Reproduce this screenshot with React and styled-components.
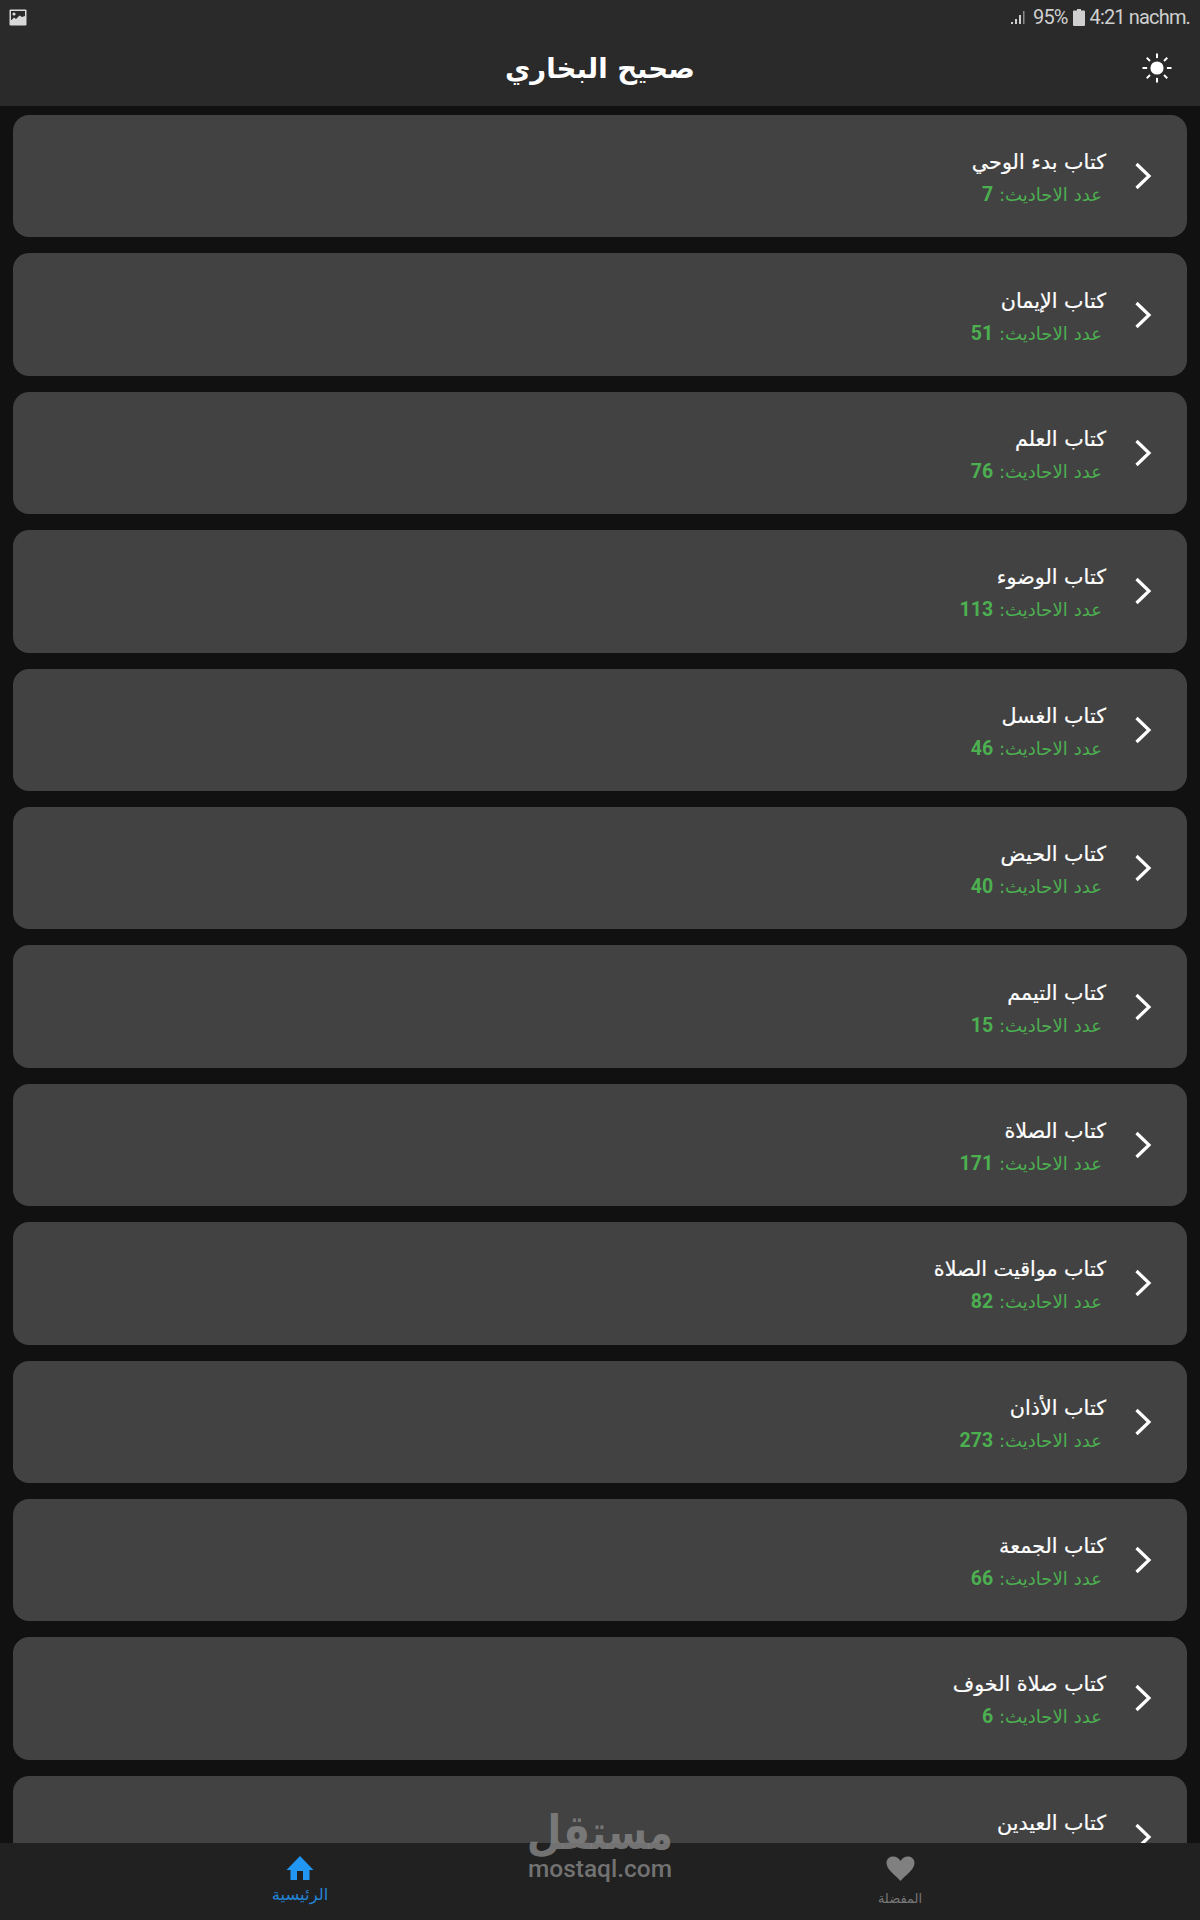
import React from "react";
import styled, { createGlobalStyle } from "styled-components";

const Global = createGlobalStyle`
  html, body { margin: 0; padding: 0; background: #111111; }
  * { box-sizing: border-box; }
`;

const ARABIC = `"DejaVu Sans", "Noto Sans", sans-serif`;

const Screen = styled.div`
  position: relative;
  width: 1200px;
  height: 1920px;
  display: flex;
  flex-direction: column;
  overflow: hidden;
  background: #111111;
  font-family: ${ARABIC};
`;

const Header = styled.header`
  flex: none;
  height: 106px;
  background: #2a2a2a;
  display: flex;
  flex-direction: column;
`;

const StatusBar = styled.div`
  height: 34px;
  padding: 0 10px 0 9px;
  display: flex;
  align-items: center;
  justify-content: space-between;
`;

const StatusRight = styled.div`
  display: flex;
  align-items: center;
  gap: 5px;
  color: #cfcfcf;
  font: 400 20px Roboto, sans-serif;
  letter-spacing: -0.85px;
`;

const TitleBar = styled.div`
  flex: 1;
  position: relative;
  display: flex;
  align-items: center;
  justify-content: center;
  padding-bottom: 3px;
`;

const Title = styled.h1`
  margin: 0;
  color: #ffffff;
  font-size: 27.6px;
  font-weight: 700;
  line-height: 40px;
`;

const ThemeButton = styled.span`
  position: absolute;
  right: 28px;
  top: 19px;
  display: flex;
`;

const List = styled.main`
  flex: 1;
  min-height: 0;
  overflow: hidden;
  padding: 9px 13px 0;
  display: flex;
  flex-direction: column;
  gap: 16px;
`;

const Card = styled.article`
  flex: none;
  height: 122.4px;
  border-radius: 16px;
  background: #424242;
  display: flex;
  direction: rtl;
  align-items: center;
  padding-right: 35px;
  gap: 28px;
`;

const CardText = styled.div`
  display: flex;
  flex-direction: column;
  align-items: flex-start;
  gap: 9px;
  margin-top: 3px;
`;

const CardTitle = styled.div`
  color: #ffffff;
  font-size: 20.7px;
  font-weight: 400;
  line-height: 26px;
  -webkit-text-stroke: 0.2px #fff;
`;

const CardCount = styled.div`
  color: #4caf50;
  font-size: 18.1px;
  line-height: 22px;
  padding-right: 4px;
`;

const CountNumber = styled.span`
  font-family: Roboto, sans-serif;
  font-weight: 700;
  font-size: 19.5px;
  letter-spacing: 0.3px;
`;

const BottomNav = styled.nav`
  flex: none;
  height: 77px;
  background: #212121;
  display: grid;
  grid-template-columns: 1fr 1fr;
  position: relative;
  z-index: 1;
`;

const NavItem = styled.div`
  display: flex;
  flex-direction: column;
  align-items: center;
  padding-top: 13px;
  gap: ${(p) => (p.$active ? "5px" : "8px")};
  color: ${(p) => (p.$active ? "#2196f3" : "#808080")};
`;

const NavLabel = styled.span`
  font-size: ${(p) => (p.$active ? "16.4px" : "13px")};
  line-height: 20px;
  opacity: ${(p) => (p.$active ? 0.85 : 0.9)};
`;

const Watermark = styled.div`
  position: absolute;
  z-index: 2;
  left: 0;
  right: 0;
  top: 1816px;
  display: flex;
  flex-direction: column;
  align-items: center;
  pointer-events: none;
  color: rgba(130, 130, 130, 0.85);
`;

const WatermarkArabic = styled.div`
  font-size: 40px;
  font-weight: 700;
  line-height: 40px;
  transform: scaleY(1.2);
  transform-origin: bottom center;
`;

const WatermarkLatin = styled.div`
  font: 500 24.5px/26px Roboto, sans-serif;
`;

const books = [
  ["كتاب بدء الوحي", 7],
  ["كتاب الإيمان", 51],
  ["كتاب العلم", 76],
  ["كتاب الوضوء", 113],
  ["كتاب الغسل", 46],
  ["كتاب الحيض", 40],
  ["كتاب التيمم", 15],
  ["كتاب الصلاة", 171],
  ["كتاب مواقيت الصلاة", 82],
  ["كتاب الأذان", 273],
  ["كتاب الجمعة", 66],
  ["كتاب صلاة الخوف", 6],
  ["كتاب العيدين", 42],
];

const Chevron = () => (
  <svg width="18" height="28" viewBox="0 0 18 28" fill="none">
    <path d="M2.5 2 L15 14 L2.5 26" stroke="#fff" strokeWidth="3.2" />
  </svg>
);

const Sun = () => {
  const rays = [0, 45, 90, 135, 180, 225, 270, 315];
  return (
    <svg width="30" height="30" viewBox="0 0 30 30">
      <circle cx="15" cy="15" r="6.6" fill="#fff" />
      {rays.map((a) => (
        <rect key={a} x="14" y="0.5" width="2" height="4.6" fill="#fff" transform={`rotate(${a} 15 15)`} />
      ))}
    </svg>
  );
};

const PictureIcon = () => (
  <svg width="18" height="17" viewBox="0 0 18 17">
    <rect x="0.5" y="0.5" width="17" height="16" rx="1" fill="#d8d8d8" />
    <rect x="2" y="2" width="14" height="9" fill="#2a2a2a" />
    <circle cx="5" cy="5" r="1.6" fill="#d8d8d8" />
    <path d="M2 11.5 L5 8.5 L7 10 L10.5 6.5 L13 8 L16 7 V12 H2Z" fill="#d8d8d8" />
  </svg>
);

const Signal = () => (
  <svg width="17" height="16" viewBox="0 0 17 16">
    <rect x="0" y="13" width="2" height="2" fill="#cfcfcf" />
    <rect x="4" y="10" width="2" height="5" fill="#cfcfcf" />
    <rect x="8" y="6" width="2" height="9" fill="#cfcfcf" />
    <rect x="12" y="2" width="1.5" height="13" fill="#8a8a8a" />
  </svg>
);

const Battery = () => (
  <svg width="12" height="17" viewBox="0 0 12 17">
    <path d="M4 0H8V1.5H11a1 1 0 0 1 1 1V16a1 1 0 0 1-1 1H1a1 1 0 0 1-1-1V2.5a1 1 0 0 1 1-1H4Z" fill="#cfcfcf" />
  </svg>
);

const Home = () => (
  <svg width="28" height="24" viewBox="0 0 28 24" fill="currentColor">
    <path d="M14 0 L27.5 14 H23.5 V24 H17 V15 H11 V24 H4.5 V14 H0.5Z" />
  </svg>
);

const Heart = () => (
  <svg width="29" height="25" viewBox="0 0 29 25" fill="currentColor">
    <path d="M14.5 25 C10 19.5 0.5 14 0.5 7 C0.5 3 3.5 0.5 7 0.5 C10.5 0.5 13 2.5 14.5 5 C16 2.5 18.5 0.5 22 0.5 C25.5 0.5 28.5 3 28.5 7 C28.5 14 19 19.5 14.5 25Z" />
  </svg>
);

export default function App() {
  return (
    <Screen>
      <Global />
      <Header>
        <StatusBar>
          <PictureIcon />
          <StatusRight>
            <Signal />
            <span>95%</span>
            <Battery />
            <span>4:21 nachm.</span>
          </StatusRight>
        </StatusBar>
        <TitleBar>
          <Title>صحيح البخاري</Title>
          <ThemeButton>
            <Sun />
          </ThemeButton>
        </TitleBar>
      </Header>
      <List>
        {books.map(([name, n]) => (
          <Card key={name}>
            <Chevron />
            <CardText>
              <CardTitle>{name}</CardTitle>
              <CardCount>
                عدد الاحاديث: <CountNumber>{n}</CountNumber>
              </CardCount>
            </CardText>
          </Card>
        ))}
      </List>
      <BottomNav>
        <NavItem $active>
          <Home />
          <NavLabel $active>الرئيسية</NavLabel>
        </NavItem>
        <NavItem>
          <Heart />
          <NavLabel>المفضلة</NavLabel>
        </NavItem>
      </BottomNav>
      <Watermark>
        <WatermarkArabic>مستقل</WatermarkArabic>
        <WatermarkLatin>mostaql.com</WatermarkLatin>
      </Watermark>
    </Screen>
  );
}
